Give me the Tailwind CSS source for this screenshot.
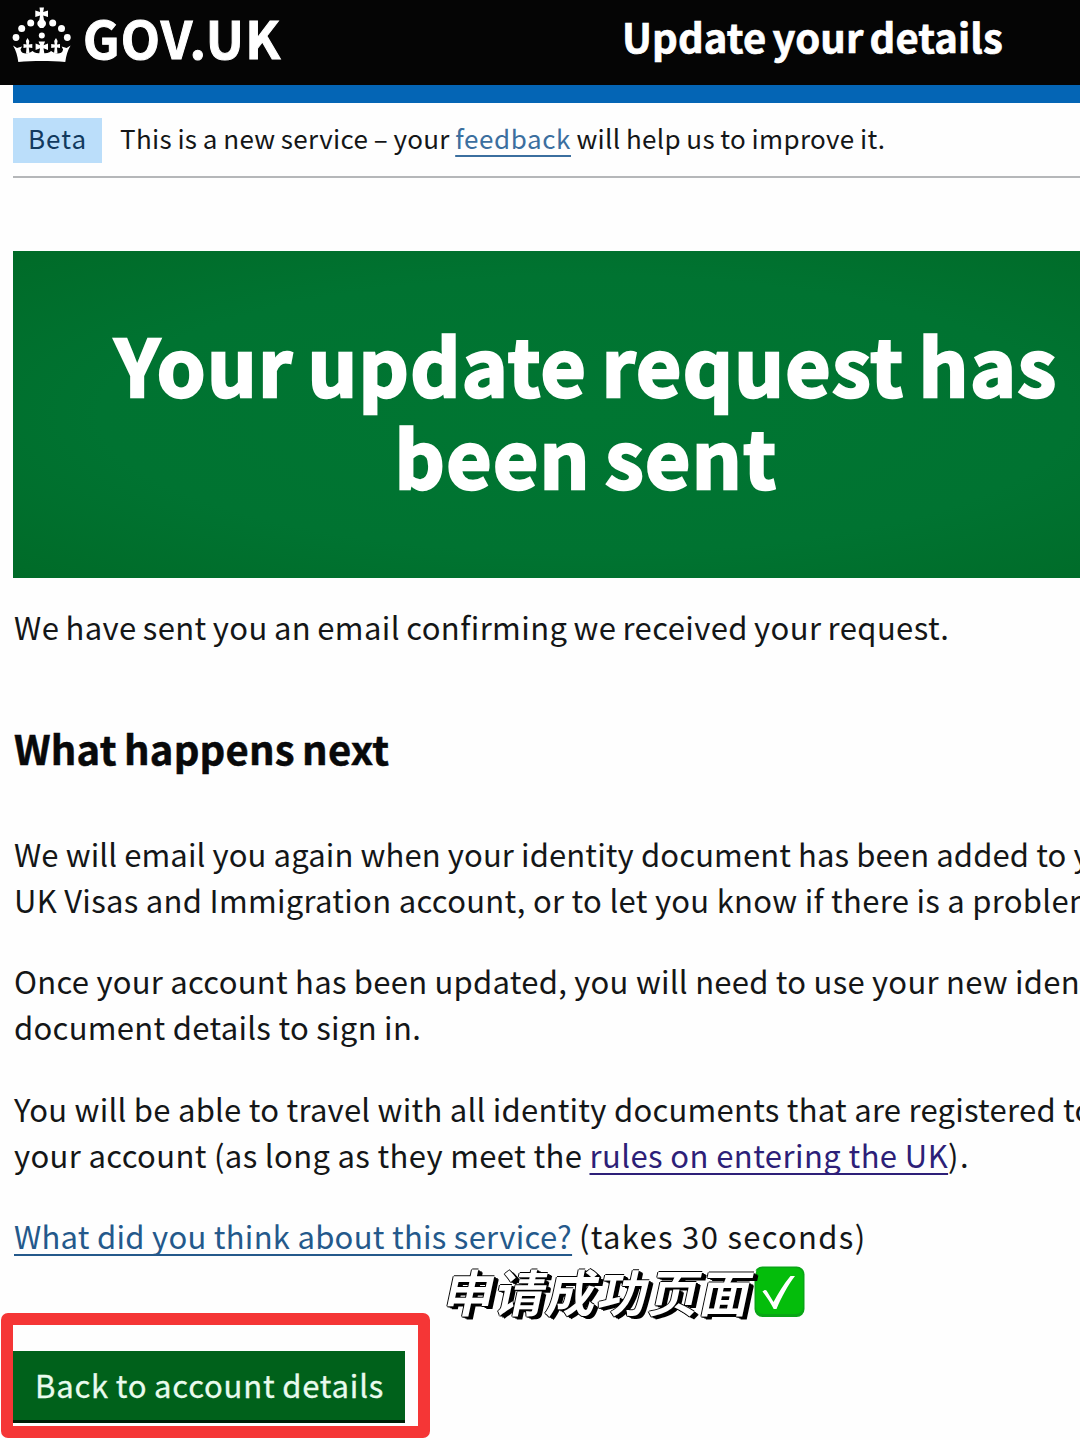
<!DOCTYPE html>
<html lang="en">
<head>
    <meta charset="UTF-8">
    <meta name="viewport" content="width=device-width, initial-scale=1.0">
    <title>Update your details - GOV.UK</title>
    <script src="https://cdn.jsdelivr.net/npm/@tailwindcss/browser@4"></script>
</head>
<body class="relative w-[1080px] h-[1440px] overflow-hidden bg-[#fefefe] text-[#141617] font-['Noto_Sans_CJK_SC',sans-serif] whitespace-nowrap">
    <header class="flex h-[85px] bg-[#050505] text-white">
        <div class="flex w-[622px] pl-3">
            <svg class="mt-[7px] w-[60px] h-[56px] shrink-0" viewBox="0 0 60 56" fill="currentColor">
                <circle cx="4" cy="30.500" r="3.400"/>
                <circle cx="9.700" cy="21.500" r="3.500"/>
                <circle cx="18.700" cy="16" r="3.500"/>
                <circle cx="40.700" cy="16" r="3.500"/>
                <circle cx="49.500" cy="21.500" r="3.500"/>
                <circle cx="55.300" cy="30.500" r="3.400"/>
                <!-- cross and orb -->
                <path d="M27.500 0.500h4.500l-.8 4.500 4.800-1.500v6.500l-4.800-1.500.8 4.500c2 1.500 2.500 3.500 1.500 5.500l-2.200 2.500h-3.300l-2.200-2.500c-1-2-.5-4 1.500-5.500l.8-4.500-4.800 1.500v-6.500l4.800 1.500z"/>
                <circle cx="29.800" cy="28.500" r="3"/>
                <!-- fleurs and centre cross -->
                <path d="M15.500 31l1.800 3-.5 3.500 3.500-.5v4l-3.500-.5.7 6h-3.500l.5-6-3 .5v-4l3 .5-.6-3.500z"/>
                <path d="M44 31l-1.800 3 .5 3.500-3.500-.5v4l3.500-.5-.7 6h3.500l-.5-6 3 .5v-4l-3 .5.6-3.500z"/>
                <path d="M26.500 34.500h6.600l-1.600 3.700 4.500-1.700v6.500l-4.500-1.700 1 6h-5.400l1-6-4.500 1.700v-6.500l4.500 1.700z"/>
                <!-- band -->
                <path d="M1 38.500l4 2.500 5-1.500-1.500 3c.5 3 3 4 5.500 4s4.500-1 6.500-2.500c2 1.800 5 2.500 9.300 2.500s7.300-.7 9.300-2.500c2 1.500 4 2.500 6.500 2.500s5-1 5.500-4l-1.500-3 5 1.500 4-2.500c-3 5-4.500 10-5.300 16.500-15-1.200-32-1.200-47 0-.8-6.500-2.300-11.500-5.300-16.500z"/>
            </svg>
            <span class="ml-[11px] text-[51px] leading-[74px] font-bold tracking-[1.300px] [-webkit-text-stroke:1px_white]">GOV.UK</span>
        </div>
        <span class="mt-px text-[40px] leading-[70px] font-bold tracking-[0.100px] [word-spacing:-3px] [-webkit-text-stroke:0.700px_white]">Update your details</span>
    </header>

    <main class="pl-[13px]">
        <div class="h-[18px] bg-[#0465b5]"></div>

        <!-- Phase banner -->
        <div class="flex h-[75px] border-b-2 border-[#b5b7b9] pt-[15px] text-[26px] leading-[40px]">
            <strong class="h-[45px] w-[89px] bg-[#bbdefa] pl-[15px] font-normal tracking-[1px] text-[#123a5e]">Beta</strong>
            <span class="ml-[18px] tracking-[0.320px] [word-spacing:-0.700px]">This is a new service – your <a href="#" class="tracking-[0.600px] text-[#3b6f9f] underline decoration-[1.500px] underline-offset-[6px] [text-decoration-skip-ink:none]">feedback</a> will help us to improve it.</span>
        </div>

        <!-- Confirmation panel -->
        <div class="mt-[73px] h-[327px] w-[1146px] bg-[#007330] bg-[radial-gradient(ellipse_at_center,#007632_0%,#007331_60%,#006b28_100%)] pt-[66px] text-center text-white">
            <h1 class="text-[78px] leading-[92px] font-bold tracking-[1.400px] [word-spacing:-5px] [-webkit-text-stroke:2.500px_white]">Your update request has<br>been sent</h1>
        </div>

        <div class="pl-px text-[31px] leading-[46px]">
            <p class="mt-[26px] tracking-[0.420px] [word-spacing:-1.200px]">We have sent you an email confirming we received your request.</p>
            <h2 class="mt-[74px] text-[40px] leading-[48px] font-bold text-[#08090a] tracking-[0.200px] [word-spacing:-2px] [-webkit-text-stroke:0.500px_#08090a]">What happens next</h2>
            <p class="mt-[59px]"><span class="tracking-[0.120px]">We will email you again when your identity document has been added to your</span><br><span class="tracking-[0.300px]">UK Visas and Immigration account, or to let you know if there is a problem.</span></p>
            <p class="mt-[35px]"><span class="tracking-[0.260px]">Once your account has been updated, you will need to use your new identity</span><br><span class="tracking-[0.300px]">document details to sign in.</span></p>
            <p class="mt-[36px]"><span class="tracking-[0.260px]">You will be able to travel with all identity documents that are registered to</span><br><span class="tracking-[0.360px]">your account (as long as they meet the <a href="#" class="tracking-[0.430px] text-[#2d1f78] underline decoration-[1.500px] underline-offset-[5px] [text-decoration-skip-ink:none]">rules on entering the UK</a><span class="tracking-[1.500px]">).</span></span></p>
            <p class="mt-[35px]"><a href="#" class="tracking-[0.280px] text-[#24598b] underline decoration-[1.500px] underline-offset-[5px] [text-decoration-skip-ink:none]">What did you think about this service?</a> <span class="tracking-[1.300px]">(takes 30 seconds)</span></p>
        </div>

        <button class="mt-[92px] block h-[72px] w-[392px] border-b-[3px] border-[#001f08] bg-[#00611b] pb-px pl-[22px] text-left text-[31px] leading-[68px] tracking-[0.800px] text-[#e9fbee] [word-spacing:-1px] [-webkit-text-stroke:0.300px_#e9fbee]">Back to account details</button>
    </main>

    <!-- Highlight frame around the button -->
    <div class="absolute left-[1px] top-[1313px] h-[125px] w-[429px] rounded-[7px] border-[12px] border-[#f53636]"></div>

    <!-- Sticker caption -->
    <div class="absolute left-[446px] top-[1266px] flex items-start">
        <span lang="zh-CN" class="-mt-[2px] w-[308px] -skew-x-12 text-[50px] leading-[52px] font-bold tracking-[1.300px] text-white [paint-order:stroke_fill] [-webkit-text-stroke:4px_white] [text-shadow:-1px_0_0_black,0_-1px_0_black,0_1px_0_black,1px_1px_0_black,2px_1px_0_black,3px_2px_0_black,4px_2px_0_black,5px_3px_0_black]">申请成功页面</span>
        <svg class="h-[52px] w-[51px]" viewBox="0 0 51 52">
            <rect x="0.500" y="0.500" width="50" height="50.500" rx="8" fill="#09a516"/>
            <rect x="2" y="2" width="47" height="46" rx="7" fill="#04bd0b"/>
            <path d="M8.500 25.500c1.500-1.500 3-2 4-1l7 11.500c5-9 10-18 17-26h4.500c-7 9-13.500 21-18.500 33h-2.800c-3-6-7-12-11.200-17.500z" fill="#fff"/>
        </svg>
    </div>
</body>
</html>
